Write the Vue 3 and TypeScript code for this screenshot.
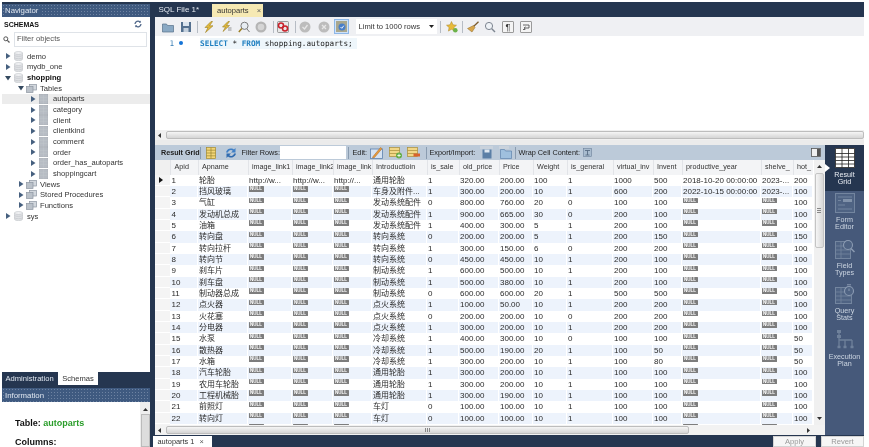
<script setup lang="ts">
type Cell = string | null
const L1 = 'http://w...'
const rows: Cell[][] = [
  ['1','轮胎',L1,L1,'http://...','通用轮胎','1','320.00','200.00','100','1','1000','500','2018-10-20 00:00:00','2023-...','200'],
  ['2','挡风玻璃',null,null,null,'车身及附件...','1','300.00','200.00','10','1','600','200','2022-10-15 00:00:00','2023-...','100'],
  ['3','气缸',null,null,null,'发动系统配件','0','800.00','760.00','20','0','100','100',null,null,'100'],
  ['4','发动机总成',null,null,null,'发动系统配件','1','900.00','665.00','30','0','200','100',null,null,'100'],
  ['5','油箱',null,null,null,'发动系统配件','1','400.00','300.00','5','1','200','100',null,null,'100'],
  ['6','转向盘',null,null,null,'转向系统','0','200.00','200.00','5','1','200','150',null,null,'150'],
  ['7','转向拉杆',null,null,null,'转向系统','1','300.00','150.00','6','0','200','200',null,null,'100'],
  ['8','转向节',null,null,null,'转向系统','0','450.00','450.00','10','1','200','100',null,null,'100'],
  ['9','刹车片',null,null,null,'制动系统','1','600.00','500.00','10','1','200','100',null,null,'100'],
  ['10','刹车盘',null,null,null,'制动系统','1','500.00','380.00','10','1','200','100',null,null,'100'],
  ['11','制动器总成',null,null,null,'制动系统','0','600.00','600.00','20','1','500','500',null,null,'500'],
  ['12','点火器',null,null,null,'点火系统','1','100.00','50.00','10','1','200','200',null,null,'100'],
  ['13','火花塞',null,null,null,'点火系统','0','200.00','200.00','10','0','200','200',null,null,'100'],
  ['14','分电器',null,null,null,'点火系统','1','300.00','200.00','10','1','200','200',null,null,'100'],
  ['15','水泵',null,null,null,'冷却系统','1','400.00','300.00','10','0','100','100',null,null,'50'],
  ['16','散热器',null,null,null,'冷却系统','1','500.00','190.00','20','1','100','50',null,null,'50'],
  ['17','水箱',null,null,null,'冷却系统','1','300.00','200.00','10','1','100','80',null,null,'50'],
  ['18','汽车轮胎',null,null,null,'通用轮胎','1','300.00','200.00','10','1','100','100',null,null,'100'],
  ['19','农用车轮胎',null,null,null,'通用轮胎','1','300.00','200.00','10','1','100','100',null,null,'100'],
  ['20','工程机械胎',null,null,null,'通用轮胎','1','300.00','190.00','10','1','100','100',null,null,'100'],
  ['21','前照灯',null,null,null,'车灯','0','100.00','100.00','10','1','100','100',null,null,'100'],
  ['22','转向灯',null,null,null,'车灯','0','100.00','100.00','10','1','100','100',null,null,'100'],
  ['','',null,null,null,'','','','','','','','',null,null,''],
]
const cols = ['Apid','Apname','image_link1','image_link2','image_link','Introductioin','is_sale','old_price','Price','Weight','is_general','virtual_inv','Invent','productive_year','shelve_','hot_']
const tree = [
  { t: 'demo', lvl: 0, ic: 'db', open: false },
  { t: 'mydb_one', lvl: 0, ic: 'db', open: false },
  { t: 'shopping', lvl: 0, ic: 'db', open: true, bold: true },
  { t: 'Tables', lvl: 1, ic: 'fold', open: true },
  { t: 'autoparts', lvl: 2, ic: 'tbl', open: false, sel: true },
  { t: 'category', lvl: 2, ic: 'tbl', open: false },
  { t: 'client', lvl: 2, ic: 'tbl', open: false },
  { t: 'clientkind', lvl: 2, ic: 'tbl', open: false },
  { t: 'comment', lvl: 2, ic: 'tbl', open: false },
  { t: 'order', lvl: 2, ic: 'tbl', open: false },
  { t: 'order_has_autoparts', lvl: 2, ic: 'tbl', open: false },
  { t: 'shoppingcart', lvl: 2, ic: 'tbl', open: false },
  { t: 'Views', lvl: 1, ic: 'fold', open: false },
  { t: 'Stored Procedures', lvl: 1, ic: 'fold', open: false },
  { t: 'Functions', lvl: 1, ic: 'fold', open: false },
  { t: 'sys', lvl: 0, ic: 'db', open: false },
]
</script>

<template>
  <div class="shell">
    <aside class="side">
      <div class="hatch nav"><span>Navigator</span></div>
      <div class="panel">
        <div class="schemas">
          <b>SCHEMAS</b>
          <svg class="refresh" viewBox="0 0 8 8" width="8" height="8"><path d="M1 4a3 3 0 0 1 5-2M7 4a3 3 0 0 1-5 2" fill="none" stroke="#51688a" stroke-width="1.3"/><path d="M6.800 .6v2.200H4.800M1.200 7.400V5.200H3.200" fill="#51688a"/></svg>
        </div>
        <div class="filter">
          <svg viewBox="0 0 7 7" width="7" height="7"><circle cx="2.800" cy="2.800" r="2" fill="none" stroke="#555" stroke-width="1"/><path d="M4.300 4.300L6.500 6.500" stroke="#555" stroke-width="1.200"/></svg>
          <div class="filter-box">Filter objects</div>
        </div>
        <div class="tree">
          <div v-for="n in tree" :key="n.t" class="node" :class="['lvl' + n.lvl, { sel: n.sel, bold: n.bold }]">
            <svg class="caret" viewBox="0 0 6 6" width="6" height="6">
              <path v-if="n.open" d="M0 1h6L3 5.500z" fill="#34495f"/>
              <path v-else d="M1 0l4.500 3L1 6z" fill="#46607f"/>
            </svg>
            <svg v-if="n.ic === 'db'" class="ic-db" viewBox="0 0 9 10" width="9" height="10">
              <path d="M.5 2v6c0 1 1.500 1.600 4 1.600S8.500 9 8.500 8V2z" fill="#dfe1e4" stroke="#bfc3c8" stroke-width=".6"/>
              <ellipse cx="4.500" cy="2" rx="4" ry="1.500" fill="#eff0f2" stroke="#bfc3c8" stroke-width=".6"/>
              <path d="M.5 4.500c1 1.200 7 1.200 8 0M.5 6.800c1 1.200 7 1.200 8 0" fill="none" stroke="#bfc3c8" stroke-width=".6"/>
            </svg>
            <svg v-else-if="n.ic === 'fold'" class="ic-fold" viewBox="0 0 11 9" width="11" height="9">
              <rect x="3.500" y=".5" width="7" height="5.500" fill="#d2d7dd" stroke="#8d96a1" stroke-width=".7"/>
              <rect x=".5" y="2.500" width="6.500" height="6" fill="#bac1c9" stroke="#8d96a1" stroke-width=".7"/>
            </svg>
            <svg v-else class="ic-tbl" viewBox="0 0 9 10" width="9" height="10">
              <rect x=".3" y=".3" width="8.400" height="9.400" fill="#b7bcc4" stroke="#a2a8b1" stroke-width=".6"/>
              <path d="M.5 3.300h8M.5 6.300h8M4.500 .5v9" stroke="#c6cad0" stroke-width=".4"/>
            </svg>
            <span class="label">{{ n.t }}</span>
          </div>
        </div>
      </div>
      <div class="side-tabs">
        <span class="adm">Administration</span>
        <span class="sch">Schemas</span>
      </div>
      <div class="hatch info-h"><span>Information</span></div>
      <div class="info">
        <div class="info-text">
          <p><b>Table:</b> <b class="green">autoparts</b></p>
          <p class="col-title"><b>Columns:</b></p>
        </div>
        <div class="info-scroll">
          <svg viewBox="0 0 5 3" width="5" height="3"><path d="M0 3l2.500-3L5 3z" fill="#333"/></svg>
          <div class="info-thumb"></div>
        </div>
      </div>
    </aside>

    <main class="main">
      <div class="tabs">
        <span class="tab-sql">SQL File 1*</span>
        <span class="tab-act">autoparts <i>×</i></span>
      </div>

      <section class="editor">
        <div class="tb">
          <svg class="i12 m0" viewBox="0 0 12 12"><path d="M.5 3h4l1 1.500h6V11H.5z" fill="#8aa9c4" stroke="#567089" stroke-width=".7"/></svg>
          <svg class="i12 m6" viewBox="0 0 12 12"><rect x="1" y="1" width="10" height="10" fill="#54708f"/><rect x="3" y="1" width="6" height="4" fill="#dbe4ee"/><rect x="3.500" y="7" width="5" height="4" fill="#c4d0dd"/></svg>
          <i class="sep m5"></i>
          <svg class="i12 m5" viewBox="0 0 12 12"><path d="M8 .5L2 6.500h3L2.500 11.500 10 4.800H6.500L9.500 .5z" fill="#e2b93b" stroke="#9c7f24" stroke-width=".6"/></svg>
          <svg class="i12 m5" viewBox="0 0 12 12"><path d="M8 .5L2.500 6h3L3 10.500 9.500 4.500H6.500L9.500 .5z" fill="#e2b93b" stroke="#9c7f24" stroke-width=".6"/><path d="M8 7h3.500M8 9h3.500" stroke="#888" stroke-width=".9"/></svg>
          <svg class="i12 m6" viewBox="0 0 12 12"><circle cx="6.500" cy="4.800" r="3.600" fill="#e8edf2" stroke="#7b7b7b" stroke-width="1"/><path d="M3.800 7.500L.8 11" stroke="#9c7f24" stroke-width="1.500"/><path d="M9 8l2.500 3" stroke="#777" stroke-width="1"/></svg>
          <svg class="i12 m5" viewBox="0 0 12 12"><circle cx="6" cy="6" r="5.500" fill="#b5b5b5"/><circle cx="6" cy="6" r="3.300" fill="#d5d5d5"/></svg>
          <i class="sep m6"></i>
          <svg class="i12 m3" viewBox="0 0 12 12"><rect x=".5" y=".5" width="11" height="11" rx="1" fill="#e8e8e8" stroke="#7a7a7a" stroke-width=".7"/><circle cx="4" cy="4.500" r="2.500" fill="none" stroke="#c8202a" stroke-width="1.500"/><circle cx="8" cy="7.500" r="2.500" fill="none" stroke="#c8202a" stroke-width="1.500"/></svg>
          <i class="sep m6"></i>
          <svg class="i12 m3" viewBox="0 0 12 12"><circle cx="6" cy="6" r="5.500" fill="#bcbcbc"/><path d="M3.500 6l2 2 3-4" fill="none" stroke="#e6e6e6" stroke-width="1.300"/></svg>
          <svg class="i12 m7" viewBox="0 0 12 12"><circle cx="6" cy="6" r="5.500" fill="#bcbcbc"/><path d="M4 4l4 4M8 4l-4 4" stroke="#e6e6e6" stroke-width="1.300"/></svg>
          <div class="toggle m4">
            <svg class="i11" viewBox="0 0 11 11"><rect width="11" height="11" fill="#a9a78e"/><circle cx="6" cy="6" r="3.500" fill="#4a7fc8"/><path d="M4.500 6l1.300 1.300 2-2.600" fill="none" stroke="#fff" stroke-width=".9"/></svg>
          </div>
          <div class="limit m7"><span>Limit to 1000 rows</span><svg viewBox="0 0 5 3" width="5" height="3"><path d="M0 0h5L2.500 3z" fill="#222"/></svg></div>
          <i class="sep m3"></i>
          <svg class="i12 m5" viewBox="0 0 12 12"><path d="M5.500 .5l1.500 3.300 3.500.4-2.600 2.400.7 3.500-3.100-1.800-3.100 1.800.7-3.500L.5 4.200l3.500-.4z" fill="#e8bb3a" stroke="#a8842a" stroke-width=".5"/><circle cx="9.300" cy="9.300" r="2.300" fill="#6cb24a"/></svg>
          <i class="sep m4"></i>
          <svg class="i12 m4" viewBox="0 0 12 12"><path d="M11.500 .8L6 6" stroke="#7a5b2e" stroke-width="1.300"/><path d="M6.500 4.500l1.500 2L5 11 .5 7.500z" fill="#d7a54a" stroke="#8f6c2e" stroke-width=".5"/></svg>
          <svg class="i12 m5" viewBox="0 0 12 12"><circle cx="5" cy="5" r="3.600" fill="#eef2f6" stroke="#7d8590" stroke-width="1"/><path d="M7.800 7.800l3.200 3.200" stroke="#7d8590" stroke-width="1.400"/></svg>
          <div class="boxed m6">¶</div>
          <div class="boxed m6"><svg viewBox="0 0 8 8" width="8" height="8"><path d="M1 2h6v3H3M1 6.500h2M3.500 3.800L2 5l1.500 1.200" fill="none" stroke="#444" stroke-width=".8"/></svg></div>
        </div>
        <div class="code">
          <div class="gutter"><span class="num">1</span><i class="dot"></i></div>
          <div class="sql"><span class="kw">SELECT</span> * <span class="kw">FROM</span> shopping.autoparts;</div>
        </div>
        <div class="hscroll ed-scroll">
          <svg viewBox="0 0 3 5" width="3" height="5"><path d="M3 0L0 2.500 3 5z" fill="#333"/></svg>
          <div class="thumb full"></div>
        </div>
      </section>

      <div class="band"></div>

      <section class="result">
        <div class="res-left">
          <div class="rtb">
            <b class="rtb-t w-rg">Result Grid</b>
            <i class="rsep"></i>
            <svg class="i10 m5" viewBox="0 0 10 12"><rect x=".5" y=".5" width="9" height="11" fill="#f3d677" stroke="#a68b2e" stroke-width=".7"/><path d="M5 .5v11M.5 3.200h9M.5 6h9M.5 8.800h9" stroke="#8f7a2a" stroke-width=".6"/></svg>
            <svg class="i12b m9" viewBox="0 0 12 12"><path d="M1 5.500a5 5 0 0 1 8-3l1.500-1.500v4.500H6l1.800-1.800A3 3 0 0 0 3 5.500z" fill="#3f7fc6"/><path d="M11 6.500a5 5 0 0 1-8 3L1.500 11V6.500H6L4.200 8.300A3 3 0 0 0 9 6.500z" fill="#2f6aaf"/></svg>
            <span class="rtb-t w-fr m5">Filter Rows:</span>
            <div class="rinput"></div>
            <i class="rsep m2"></i>
            <span class="rtb-t w-ed m4">Edit:</span>
            <svg class="i13 m3" viewBox="0 0 13 13"><rect x=".5" y="3" width="12" height="9.500" fill="#d5e2f2" stroke="#5d82ae" stroke-width=".8"/><path d="M3 10.500L10.500 1.500l1.500 1.200L4.500 11.500 2.500 12z" fill="#e89a3c" stroke="#a2682b" stroke-width=".5"/></svg>
            <svg class="i13 m6" viewBox="0 0 13 13"><rect x=".5" y="1.500" width="10" height="9" fill="#f1d788" stroke="#a98e3a" stroke-width=".7"/><path d="M.5 4.500h10M.5 7.500h10" stroke="#a98e3a" stroke-width=".7"/><circle cx="10" cy="9.500" r="3" fill="#63ad45"/><path d="M8.300 9.500h3.400M10 7.800v3.400" stroke="#fff" stroke-width=".8"/></svg>
            <svg class="i13 m5" viewBox="0 0 13 13"><rect x=".5" y="1.500" width="10" height="9" fill="#f1d788" stroke="#a98e3a" stroke-width=".7"/><path d="M.5 4.500h10M.5 7.500h10" stroke="#a98e3a" stroke-width=".7"/><rect x="6.500" y="7.500" width="6.500" height="3" fill="#d8622d"/></svg>
            <i class="rsep m6"></i>
            <span class="rtb-t w-ex m3">Export/Import:</span>
            <svg class="i13 m5" viewBox="0 0 13 13"><path d="M0 0h13v3H0z" fill="#c9d2dc"/><path d="M2.500 3.500h9v9h-9z" fill="#5b7fa6"/><path d="M4.500 3.500h5v3h-5z" fill="#dfe8f1"/></svg>
            <svg class="i13 m6" viewBox="0 0 13 13"><path d="M0 0h10v3H0z" fill="#c9d2dc"/><path d="M1.500 3.500h4l1 1.500h6v7.500h-11z" fill="#9fc0de" stroke="#5d82ae" stroke-width=".7"/></svg>
            <i class="rsep m3"></i>
            <span class="rtb-t w-wr m3">Wrap Cell Content:</span>
            <svg class="i9 m6" viewBox="0 0 9 9"><rect x=".5" y=".5" width="8" height="8" fill="#a9bccf" stroke="#6c8199" stroke-width=".6"/><path d="M2 2.500h5M4.500 2.500v4.500M2.500 7h4" stroke="#50647c" stroke-width=".8"/></svg>
            <svg class="i10 tog" viewBox="0 0 10 9"><rect x=".5" y=".5" width="9" height="8" fill="#f0f0f0" stroke="#555" stroke-width=".8"/><rect x="6" y="1" width="3" height="7" fill="#555"/></svg>
          </div>
          <div class="grid-wrap">
            <div class="grid">
              <div class="hrow">
                <div class="hgut"></div>
                <div v-for="c in cols" :key="c" class="hc"><span>{{ c }}</span></div>
              </div>
              <div class="body">
                <div v-for="(r, ri) in rows" :key="ri" class="row" :class="{ alt: ri % 2 === 1 }">
                  <div class="gut">
                    <svg v-if="ri === 0" viewBox="0 0 4 6" width="4" height="6"><path d="M0 0l4 3-4 3z" fill="#111"/></svg>
                  </div>
                  <div v-for="(c, ci) in r" :key="ci" class="cell">
                    <span v-if="c === null" class="null">{{ ri < 22 ? 'NULL' : '' }}</span>
                    <template v-else>{{ c }}</template>
                  </div>
                </div>
              </div>
            </div>
            <div class="vscroll">
              <svg viewBox="0 0 5 3" width="5" height="3"><path d="M0 3l2.500-3L5 3z" fill="#333"/></svg>
              <div class="vthumb"><i></i></div>
              <div class="vspace"></div>
              <svg viewBox="0 0 5 3" width="5" height="3"><path d="M0 0h5L2.500 3z" fill="#333"/></svg>
            </div>
          </div>
          <div class="hscroll res-scroll">
            <svg viewBox="0 0 3 5" width="3" height="5"><path d="M3 0L0 2.500 3 5z" fill="#333"/></svg>
            <div class="thumb part"><i></i></div>
            <div class="hspace"></div>
            <svg viewBox="0 0 3 5" width="3" height="5"><path d="M0 0l3 2.500L0 5z" fill="#333"/></svg>
          </div>
        </div>

        <nav class="rail">
          <div class="rail-it act">
            <svg class="rail-i" viewBox="0 0 20 20" width="20" height="20"><rect x=".5" y=".5" width="19" height="19" fill="#fff" stroke="#444"/><path d="M.5 5.500h19M.5 9h19M.5 12.500h19M.5 16h19M7 .5v19M13.500 .5v19" stroke="#222" stroke-width=".8"/></svg>
            <span>Result<br>Grid</span>
          </div>
          <div class="rail-it">
            <svg class="rail-i" viewBox="0 0 20 20" width="20" height="20"><rect x=".5" y=".5" width="19" height="19" fill="#4f6383" stroke="#73859f"/><path d="M3 4h14M3 16h14M3 12h7" stroke="#73859f"/><rect x="8" y="6" width="9" height="3" fill="#8192aa"/><path d="M3 7.500h3" stroke="#73859f"/></svg>
            <span>Form<br>Editor</span>
          </div>
          <div class="rail-it">
            <svg class="rail-i" viewBox="0 0 20 20" width="20" height="20"><rect x=".5" y="2.500" width="15" height="17" fill="#4f6383" stroke="#73859f"/><path d="M.5 7h15M.5 11h15M.5 15h15M6 2.500v17" stroke="#73859f" stroke-width=".8"/><circle cx="13" cy="6" r="4.500" fill="#4f6383" stroke="#8b9bb2" stroke-width="1.100"/><path d="M16 9.500l3.500 3.500" stroke="#8b9bb2" stroke-width="1.500"/></svg>
            <span>Field<br>Types</span>
          </div>
          <div class="rail-it">
            <svg class="rail-i" viewBox="0 0 20 20" width="20" height="20"><rect x=".5" y="3.500" width="16" height="16" fill="#4f6383" stroke="#73859f"/><path d="M.5 8h16M.5 12h16M.5 16h16M6 3.500v16" stroke="#73859f" stroke-width=".8"/><circle cx="14" cy="7" r="4.500" fill="#4f6383" stroke="#8b9bb2" stroke-width="1.100"/><path d="M14 7V4.500M12 .8h4" stroke="#8b9bb2"/></svg>
            <span>Query<br>Stats</span>
          </div>
          <div class="rail-it">
            <svg class="rail-i" viewBox="0 0 20 20" width="20" height="20"><path d="M4 1.500v16M4 10h13M10 10v7M17 10v7" stroke="#6f819b" stroke-width="1.300" fill="none"/><rect x="2" y="0" width="4" height="3" fill="#6f819b"/><rect x="2" y="5" width="4" height="3" fill="#6f819b"/><path d="M2.500 17h3M8.500 17h3M15.500 17h3" stroke="#6f819b" stroke-width="2.500"/></svg>
            <span>Execution<br>Plan</span>
          </div>
        </nav>
      </section>

      <footer class="foot">
        <span class="ftab">autoparts 1 <i>×</i></span>
        <span class="btn apply">Apply</span>
        <span class="btn">Revert</span>
      </footer>
    </main>
  </div>
</template>

<style>
html, body { margin: 0; background: #fff; overflow: hidden; }
</style>

<style scoped>
.shell {
  --cols: 27.5px 50px 44px 41px 39px 55px 32px 40px 34px 34px 46px 40px 29px 79px 32px 20px;
  box-sizing: border-box;
  width: 862px;
  height: 445px;
  margin: 2px 5px 0 2px;
  background: #253650;
  display: flex;
  overflow: hidden;
  font: 7.6px "Liberation Sans", "Noto Sans CJK SC", sans-serif;
  color: #222;
  filter: blur(0.35px);
}
svg { display: block; flex: none; }
.side { width: 148px; flex: none; display: flex; flex-direction: column; }
.hatch {
  background-color: #3f5a80;
  background-image: radial-gradient(#6e83a2 .6px, transparent .7px);
  background-size: 3px 3px;
  color: #dfe6ef;
  display: flex;
  align-items: center;
  padding-left: 3px;
  font-size: 7.8px;
}
.hatch span { background: #3f5a80; padding-right: 2px; }
.nav { height: 13px; margin-top: 2px; }
.panel { height: 356px; background: #fff; display: flex; flex-direction: column; }
.schemas { height: 15px; display: flex; align-items: center; justify-content: space-between; padding: 0 8px 0 2px; font-size: 7px; color: #111; }
.filter { height: 15px; display: flex; align-items: center; gap: 4px; padding: 0 1px; margin-bottom: 4px; }
.filter-box { flex: 1; height: 13px; border: 1px solid #dfe3e8; line-height: 12px; padding-left: 2px; color: #555; font-size: 7.6px; margin-right: 2px; }
.tree { display: flex; flex-direction: column; }
.node { height: 10.67px; display: flex; align-items: center; white-space: nowrap; color: #333; }
.node.sel { background: #ececec; }
.node.bold { font-weight: 700; color: #111; }
.lvl0 { padding-left: 3px; }
.lvl1 { padding-left: 16px; }
.lvl2 { padding-left: 28px; }
.ic-db { margin-left: 3px; }
.ic-fold { margin-left: 2px; }
.ic-tbl { margin-left: 3px; }
.lvl0 .label { margin-left: 4px; }
.lvl1 .label { margin-left: 3px; }
.lvl2 .label { margin-left: 5px; }
.side-tabs { height: 16px; display: flex; align-items: flex-start; }
.adm { color: #dfe6ef; height: 13px; line-height: 13px; padding-left: 3.5px; width: 52.5px; flex: none; }
.sch { background: #fff; height: 13px; line-height: 13px; width: 40px; text-align: center; color: #333; }
.info-h { height: 14px; }
.info { flex: 1; background: #fff; display: flex; }
.info-text { flex: 1; padding: 16px 0 0 13px; font-size: 9px; color: #111; }
.info-text p { margin: 0; line-height: 10px; }
.col-title { margin-top: 9px !important; }
.green { color: #2a9d2a; }
.info-scroll { width: 10px; background: #eee; display: flex; flex-direction: column; align-items: center; padding-top: 6px; gap: 3px; }
.info-thumb { width: 9px; flex: 1; background: #ddd; border: 1px solid #bbb; box-sizing: border-box; }

.main { margin-left: 4.5px; flex: 1; min-width: 0; display: flex; flex-direction: column; }
.tabs { height: 15px; display: flex; align-items: flex-end; flex: none; }
.tab-sql { width: 57.5px; padding-left: 4px; box-sizing: border-box; height: 13px; line-height: 12px; color: #e4e9f0; font-size: 8px; }
.tab-act { width: 51px; box-sizing: border-box; background: #f6e9b3; height: 13px; line-height: 13px; padding-left: 5px; color: #333; font-size: 7.6px; }
.tab-act i { font-style: normal; margin-left: 6px; color: #555; }
.editor { height: 123px; flex: none; background: #fff; display: flex; flex-direction: column; }
.tb { height: 19px; flex: none; background: #eff0f3; display: flex; align-items: center; padding-left: 7.5px; }
.i12, .i12b { width: 12px; height: 12px; }
.i11 { width: 11px; height: 11px; }
.i10 { width: 10px; height: 12px; }
.i13 { width: 13px; height: 13px; }
.i9 { width: 9px; height: 9px; }
.m0 { margin-left: 0; }
.m2 { margin-left: 2px; }
.m3 { margin-left: 3px; }
.m4 { margin-left: 4px; }
.m5 { margin-left: 5px; }
.m6 { margin-left: 6px; }
.m7 { margin-left: 7px; }
.m9 { margin-left: 9px; }
.sep { width: 1px; height: 12px; background: #b6bcc4; flex: none; }
.toggle { width: 15px; height: 15px; box-sizing: border-box; border: 1px solid #8db7e8; background: #cfe2f8; display: flex; align-items: center; justify-content: center; }
.limit { width: 81px; height: 15px; background: #fff; display: flex; align-items: center; justify-content: space-between; padding: 0 3px 0 2.5px; box-sizing: border-box; color: #333; }
.boxed { width: 12px; height: 12px; box-sizing: border-box; border: 1px solid #9a9a9a; border-radius: 1px; background: #f4f4f4; display: flex; align-items: center; justify-content: center; font-size: 9px; color: #333; }
.code { flex: 1; display: flex; padding-top: 1.5px; font: 7.7px "DejaVu Sans Mono", monospace; }
.gutter { width: 45.5px; flex: none; height: 11px; display: flex; align-items: center; padding-left: 15px; box-sizing: border-box; gap: 5px; color: #3b7fb5; }
.dot { width: 4px; height: 4px; border-radius: 50%; background: #1473d6; }
.sql { height: 11px; line-height: 11px; background: #eef6fb; padding-right: 4px; color: #222; white-space: pre; }
.kw { color: #1f7fc0; font-weight: 700; }
.hscroll { height: 10px; flex: none; background: #f0f0f0; display: flex; align-items: center; padding-left: 3px; box-sizing: border-box; }
.thumb { height: 8px; box-sizing: border-box; background: linear-gradient(#f5f5f5, #d5d5d5); border: 1px solid #bdbdbd; border-radius: 2px; margin-left: 5px; display: flex; align-items: center; justify-content: center; }
.thumb.full { flex: 1; }
.thumb.part { width: 523px; }
.thumb.part i { width: 5px; height: 4px; background: repeating-linear-gradient(90deg, #888 0 1px, transparent 1px 2px); }
.hspace { flex: 1; }
.res-scroll { background: #f2f2f2; padding-right: 15px; }
.band { height: 5px; flex: none; background: #ebebeb; }
.result { flex: 1; min-height: 0; display: flex; }
.res-left { width: 670.5px; flex: none; display: flex; flex-direction: column; min-width: 0; background: #fff; }
.rtb { height: 15px; flex: none; background: #bccad9; display: flex; align-items: center; padding-left: 6.5px; padding-right: 4px; white-space: nowrap; color: #222; }
.rtb-t { font-size: 7.3px; flex: none; }
.w-rg { width: 38.5px; font-size: 7.2px; }
.w-fr { width: 38px; }
.w-ed { width: 14px; }
.w-ex { width: 45px; }
.w-wr { width: 58px; }
.rsep { width: 1px; height: 12px; background: #8a9cb0; flex: none; }
.rinput { width: 66px; height: 13px; background: #fff; flex: none; }
.tog { height: 9px; margin-left: auto; }
.grid-wrap { flex: 1; min-height: 0; display: flex; }
.grid { width: 658px; flex: none; display: flex; flex-direction: column; overflow: hidden; margin-right: 1.5px; }
.hrow { height: 14.7px; flex: none; display: grid; grid-template-columns: 15.5px var(--cols); background: #f3f4f6; }
.hgut { background: #f0f0f0; }
.hc { overflow: hidden; white-space: nowrap; padding-left: 3.5px; line-height: 14px; border-left: 1px solid #e2e4e8; box-sizing: border-box; color: #333; font-size: 7.2px; }
.body { flex: 1; overflow: hidden; }
.row { height: 11.33px; display: grid; grid-template-columns: 15.5px var(--cols); background: #fff; }
.row.alt { background: #edf3fc; }
.gut { background: #f4f4f4; border-bottom: 1px solid #fff; box-sizing: border-box; display: flex; align-items: center; padding-left: 4px; }
.cell { white-space: nowrap; overflow: hidden; padding-left: 1.5px; border-right: 1px solid #fff; box-sizing: border-box; line-height: 11px; color: #2a2a2a; font-size: 8px; }
.null { display: block; width: 15px; height: 5.5px; margin: .3px 0 0 -.5px; background: #7d7d7d; color: #fff; font-size: 4.5px; font-weight: 700; line-height: 5.5px; text-align: center; border-radius: .5px; }
.vscroll { width: 10.5px; flex: none; background: #f0f0f0; display: flex; flex-direction: column; align-items: center; padding: 5px 0; box-sizing: border-box; }
.vthumb { margin-top: 5px; width: 9px; height: 75px; flex: none; box-sizing: border-box; background: linear-gradient(90deg, #f5f5f5, #d8d8d8); border: 1px solid #c4c4c4; border-radius: 2px; display: flex; align-items: center; justify-content: center; }
.vthumb i { width: 4px; height: 5px; background: repeating-linear-gradient(#888 0 1px, transparent 1px 2px); }
.vspace { flex: 1; }
.rail { flex: 1; background: #46597a; display: flex; flex-direction: column; color: #cdd6e2; font-size: 7.2px; text-align: center; line-height: 7.4px; }
.rail-it { height: 45.5px; flex: none; display: flex; flex-direction: column; align-items: center; padding-top: 2.5px; box-sizing: border-box; gap: 3px; position: relative; }
.rail-it.act { background: #253650; color: #e9edf3; }
.rail-it.act::before { content: ""; position: absolute; left: 0; top: 19px; border: 4px solid transparent; border-left: 5px solid #fff; }
.foot { height: 12px; flex: none; display: flex; align-items: flex-end; }
.ftab { width: 59px; height: 11px; background: #fff; line-height: 11px; padding-left: 5px; box-sizing: border-box; margin-left: -2px; color: #333; font-size: 7.4px; }
.ftab i { font-style: normal; color: #555; margin-left: 3px; }
.btn { width: 43px; height: 11px; background: #f6f6f6; border: 1px solid #d4d4d4; box-sizing: border-box; line-height: 10px; text-align: center; color: #999; }
.apply { margin-left: auto; margin-right: 5px; }
</style>
